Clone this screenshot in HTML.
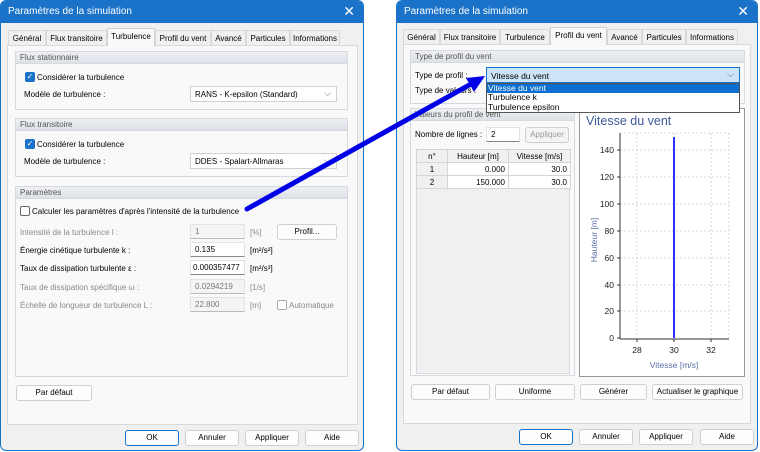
<!DOCTYPE html>
<html><head><meta charset="utf-8"><style>
*{box-sizing:border-box;margin:0;padding:0}
body{width:760px;height:452px;background:#fff;position:relative;overflow:hidden;font-family:"Liberation Sans",sans-serif;font-size:8px;color:#000}
div,td,text{white-space:nowrap}
.a{position:absolute;white-space:nowrap}
.win{position:absolute;top:0;height:451px;background:#f0f0f0;border:1px solid #1a73c9;border-radius:6px;overflow:hidden}
.tb{position:absolute;left:0;top:0;right:0;height:22px;background:#1a73c9;color:#fff;font-size:10px;padding:5px 0 0 7px}
.x{position:absolute;right:8px;top:2px;font-size:14px;color:#fff}
.tab{position:absolute;top:29px;height:15px;border:1px solid #d9d9d9;border-bottom:none;background:#f0f0f0;padding:3px 0 0;font-size:8px;text-align:center;overflow:hidden}
.tab.s{top:27px;height:18px;background:#f9f9f9;border-color:#d0d0d0;z-index:2;padding-top:3px}
.panel{position:absolute;background:#f9f9f9;border:1px solid #d9d9d9}
.grp{position:absolute;border:1px solid #d5d9e0;background:#f9f9f9}
.gh{position:absolute;left:0;right:0;top:0;height:12px;background:linear-gradient(#eef0f4,#dde1e7);color:#555;font-size:8px;padding:0 0 0 4px;line-height:12px;border-bottom:1px solid #d5d9e0}
.btn{position:absolute;height:16px;background:#fdfdfd;border:1px solid #cfcfcf;border-radius:3px;text-align:center;line-height:14px;font-size:8px;overflow:hidden}
.btn.def{border:1.5px solid #1a73c9}
.inp{position:absolute;height:15px;background:#fff;border:1px solid #e3e3e3;border-bottom:1px solid #888;padding:2px 0 0 4px;font-size:8px;overflow:hidden}
.inp.d{background:#f4f4f4;color:#777;border-bottom-color:#bbb}
.cb{position:absolute;width:10px;height:10px;border:1px solid #666;border-radius:2px;background:#fff}
.cb.on{background:#1a73c9;border-color:#1a73c9;color:#fff;font-size:8px;line-height:8px;text-align:center}
.cmb{position:absolute;height:16px;background:#fff;border:1px solid #d0d0d0;padding:3px 0 0 4px}
.cmb:after{content:"⌵";position:absolute;right:5px;top:1px;color:#666;font-size:9px}
.g{color:#8a8a8a}
</style></head><body>

<!-- LEFT DIALOG -->
<div class="win" style="left:0;width:364px">
<div class="tb">Paramètres de la simulation<span class="x">✕</span></div>
<div class="tab" style="left:7px;width:38px">Général</div>
<div class="tab" style="left:45px;width:61px">Flux transitoire</div>
<div class="tab s" style="left:106px;width:48px">Turbulence</div>
<div class="tab" style="left:154px;width:56px">Profil du vent</div>
<div class="tab" style="left:210px;width:35px">Avancé</div>
<div class="tab" style="left:245px;width:44px">Particules</div>
<div class="tab" style="left:289px;width:50px">Informations</div>
<div class="panel" style="left:6px;top:44px;width:351px;height:380px"></div>

<div class="grp" style="left:14px;top:50px;width:333px;height:59px"><div class="gh">Flux stationnaire</div></div>
<div class="cb on a" style="left:24px;top:71px">✓</div><div class="a" style="left:36px;top:72px">Considérer la turbulence</div>
<div class="a" style="left:23px;top:89px">Modèle de turbulence :</div>
<div class="cmb" style="left:189px;top:85px;width:147px">RANS - K-epsilon (Standard)</div>

<div class="grp" style="left:14px;top:117px;width:333px;height:59px"><div class="gh">Flux transitoire</div></div>
<div class="cb on a" style="left:24px;top:138px">✓</div><div class="a" style="left:36px;top:139px">Considérer la turbulence</div>
<div class="a" style="left:23px;top:156px">Modèle de turbulence :</div>
<div class="cmb" style="left:189px;top:152px;width:147px">DDES - Spalart-Allmaras</div>

<div class="grp" style="left:14px;top:185px;width:333px;height:191px"><div class="gh">Paramètres</div></div>
<div class="cb a" style="left:19px;top:205px"></div><div class="a" style="left:31px;top:206px">Calculer les paramètres d'après l'intensité de la turbulence</div>
<div class="a g" style="left:19px;top:227px">Intensité de la turbulence I :</div>
<div class="inp d" style="left:189px;top:223px;width:55px">1</div><div class="a g" style="left:249px;top:227px">[%]</div>
<div class="btn" style="left:276px;top:223px;width:60px">Profil...</div>
<div class="a" style="left:19px;top:245px">Énergie cinétique turbulente k :</div>
<div class="inp" style="left:189px;top:241px;width:55px">0.135</div><div class="a" style="left:249px;top:245px">[m²/s²]</div>
<div class="a" style="left:19px;top:263px">Taux de dissipation turbulente ε :</div>
<div class="inp" style="left:189px;top:259px;width:55px;padding-left:2px">0.000357477</div><div class="a" style="left:249px;top:263px">[m²/s³]</div>
<div class="a g" style="left:19px;top:282px">Taux de dissipation spécifique ω :</div>
<div class="inp d" style="left:189px;top:278px;width:55px">0.0294219</div><div class="a g" style="left:249px;top:282px">[1/s]</div>
<div class="a g" style="left:19px;top:300px">Échelle de longueur de turbulence L :</div>
<div class="inp d" style="left:189px;top:296px;width:55px">22.800</div><div class="a g" style="left:249px;top:300px">[m]</div>
<div class="cb a" style="left:276px;top:299px;border-color:#aaa"></div><div class="a g" style="left:288px;top:300px">Automatique</div>

<div class="btn" style="left:15px;top:384px;width:76px">Par défaut</div>
<div class="btn def" style="left:124px;top:429px;width:54px">OK</div>
<div class="btn" style="left:184px;top:429px;width:54px">Annuler</div>
<div class="btn" style="left:244px;top:429px;width:54px">Appliquer</div>
<div class="btn" style="left:304px;top:429px;width:54px">Aide</div>
</div>

<!-- RIGHT DIALOG -->
<div class="win" style="left:396px;width:362px">
<div class="tb">Paramètres de la simulation<span class="x">✕</span></div>
</div>
<div class="tab" style="left:403px;width:37px">Général</div>
<div class="tab" style="left:440px;width:60px">Flux transitoire</div>
<div class="tab" style="left:500px;width:50px">Turbulence</div>
<div class="tab s" style="left:550px;width:57px">Profil du vent</div>
<div class="tab" style="left:607px;width:35px">Avancé</div>
<div class="tab" style="left:642px;width:44px">Particules</div>
<div class="tab" style="left:686px;width:52px">Informations</div>
<div class="panel" style="left:403px;top:44px;width:348px;height:380px"></div>

<div class="grp" style="left:410px;top:50px;width:335px;height:54px"><div class="gh">Type de profil du vent</div></div>
<div class="a" style="left:415px;top:71px">Type de profil :</div>
<div class="a" style="left:415px;top:86px">Type de valeurs :</div>

<div class="grp" style="left:410px;top:108px;width:165px;height:268px"><div class="gh">Valeurs du profil de vent</div></div>
<div class="a" style="left:415px;top:130px">Nombre de lignes :</div>
<div class="inp" style="left:486px;top:127px;width:34px">2</div>
<div class="btn" style="left:525px;top:127px;width:44px;color:#999;background:#f4f4f4">Appliquer</div>
<div class="a" style="left:416px;top:149px;width:154px;height:225px;background:#f0f0f0;border:1px solid #d5d9e0"></div>
<table class="a" style="left:416px;top:149px;border-collapse:collapse;font-size:8px">
<tr style="height:13px;background:#f0f0f0"><td style="width:31px;text-align:center;border:1px solid #d5d5d5">n°</td><td style="width:61px;text-align:center;border:1px solid #d5d5d5">Hauteur [m]</td><td style="width:62px;text-align:center;border:1px solid #d5d5d5">Vitesse [m/s]</td></tr>
<tr style="height:13px"><td style="text-align:center;border:1px solid #d5d5d5;background:#f0f0f0">1</td><td style="text-align:right;padding-right:3px;border:1px solid #d5d5d5;background:#fff">0.000</td><td style="text-align:right;padding-right:3px;border:1px solid #d5d5d5;background:#fff">30.0</td></tr>
<tr style="height:13px"><td style="text-align:center;border:1px solid #d5d5d5;background:#f0f0f0">2</td><td style="text-align:right;padding-right:3px;border:1px solid #d5d5d5;background:#fff">150.000</td><td style="text-align:right;padding-right:3px;border:1px solid #d5d5d5;background:#fff">30.0</td></tr>
</table>

<div class="a" style="left:579px;top:108px;width:166px;height:269px;background:#fff;border:1px solid #999"></div>
<svg class="a" style="left:579px;top:108px" width="166" height="269" viewBox="579 108 166 269" font-family="Liberation Sans" font-size="8.5">
<text x="586" y="125" font-size="12.5" fill="#3b5a9a">Vitesse du vent</text>
<g stroke="#ccc" stroke-dasharray="2,2" stroke-width="0.8">
<line x1="620" y1="150" x2="729" y2="150"/><line x1="620" y1="177" x2="729" y2="177"/><line x1="620" y1="204" x2="729" y2="204"/><line x1="620" y1="231" x2="729" y2="231"/><line x1="620" y1="258" x2="729" y2="258"/><line x1="620" y1="285" x2="729" y2="285"/><line x1="620" y1="311" x2="729" y2="311"/>
<line x1="637" y1="133" x2="637" y2="338"/><line x1="711" y1="133" x2="711" y2="338"/><line x1="674" y1="133" x2="674" y2="338"/>
<line x1="620" y1="133" x2="729" y2="133"/><line x1="729" y1="133" x2="729" y2="338"/>
</g>
<g stroke="#333" stroke-width="1"><line x1="620" y1="133" x2="620" y2="339"/><line x1="620" y1="339" x2="729" y2="339"/>
<path d="M617 150h3M617 177h3M617 204h3M617 231h3M617 258h3M617 285h3M617 311h3M617 338h3M637 339v3M674 339v3M711 339v3"/></g>
<g fill="#222" text-anchor="end"><text x="614" y="153">140</text><text x="614" y="180">120</text><text x="614" y="207">100</text><text x="614" y="234">80</text><text x="614" y="261">60</text><text x="614" y="288">40</text><text x="614" y="314">20</text><text x="614" y="341">0</text></g>
<g fill="#222" text-anchor="middle"><text x="637" y="353">28</text><text x="674" y="353">30</text><text x="711" y="353">32</text></g>
<text x="674" y="368" text-anchor="middle" fill="#5a6fa8">Vitesse [m/s]</text>
<text transform="translate(597,240) rotate(-90)" text-anchor="middle" fill="#5a6fa8">Hauteur [m]</text>
<line x1="674" y1="137" x2="674" y2="338" stroke="#3030ff" stroke-width="2"/>
</svg>

<div class="btn" style="left:411px;top:384px;width:79px">Par défaut</div>
<div class="btn" style="left:495px;top:384px;width:80px">Uniforme</div>
<div class="btn" style="left:580px;top:384px;width:67px">Générer</div>
<div class="btn" style="left:652px;top:384px;width:91px">Actualiser le graphique</div>
<div class="btn def" style="left:519px;top:429px;width:54px">OK</div>
<div class="btn" style="left:579px;top:429px;width:54px">Annuler</div>
<div class="btn" style="left:639px;top:429px;width:54px">Appliquer</div>
<div class="btn" style="left:700px;top:429px;width:54px">Aide</div>

<!-- combo & dropdown -->
<div class="cmb" style="left:486px;top:67px;width:254px;background:#cce4f7;border-color:#1a73c9;padding-top:3px;font-size:8.5px">Vitesse du vent</div>
<div class="a" style="left:486px;top:83px;width:254px;height:30px;background:#fff;border:1px solid #555;font-size:8.5px;line-height:9.3px">
<div style="background:#0a6fd0;color:#fff;padding-left:1px">Vitesse du vent</div>
<div style="padding-left:1px">Turbulence k</div>
<div style="padding-left:1px">Turbulence epsilon</div>
</div>

<!-- arrow -->
<svg class="a" style="left:0;top:0" width="760" height="452">
<line x1="247" y1="209" x2="471" y2="84" stroke="#0000e6" stroke-width="5" stroke-linecap="round"/>
<polygon points="485,76 466,78 474,92" fill="#0000e6"/>
</svg>
</body></html>
